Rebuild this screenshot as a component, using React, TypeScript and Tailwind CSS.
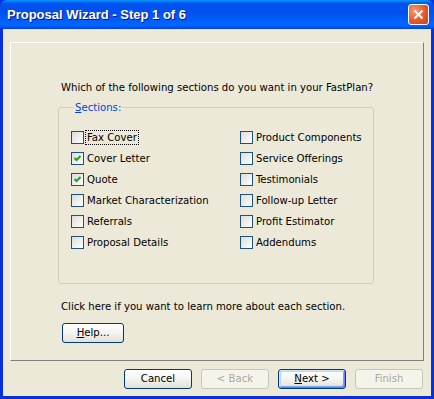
import React from 'react';

const left = [
  { label: 'Fax Cover', checked: false, focus: true },
  { label: 'Cover Letter', checked: true },
  { label: 'Quote', checked: true },
  { label: 'Market Characterization', checked: false },
  { label: 'Referrals', checked: false },
  { label: 'Proposal Details', checked: false },
];

const right = [
  { label: 'Product Components', checked: false },
  { label: 'Service Offerings', checked: false },
  { label: 'Testimonials', checked: false },
  { label: 'Follow-up Letter', checked: false },
  { label: 'Profit Estimator', checked: false },
  { label: 'Addendums', checked: false },
];

type Item = { label: string; checked: boolean; focus?: boolean };

function CheckRow({ item }: { item: Item }) {
  return (
    <div className="flex items-center h-[13px]">
      <span className="relative w-[13px] h-[13px] border border-[#1c5180] bg-gradient-to-br from-[#dcdcd7] to-white shrink-0">
        {item.checked && (
          <svg width="11" height="11" viewBox="0 0 11 11" className="absolute left-0 top-0">
            <polyline points="2.5,5 4.5,7 8.5,3" fill="none" stroke="#21a121" strokeWidth="2" />
          </svg>
        )}
      </span>
      <span
        className={
          'ml-[2px] px-[1px] leading-[13px] ' +
          (item.focus ? 'outline outline-1 outline-dotted outline-black' : '')
        }
      >
        {item.label}
      </span>
    </div>
  );
}

function XpButton({
  children,
  disabled,
  primary,
  className,
}: {
  children: React.ReactNode;
  disabled?: boolean;
  primary?: boolean;
  className?: string;
}) {
  let look =
    'border-[#003c74] bg-gradient-to-b from-white via-[#f4f4f0] to-[#e3e0d5] text-black';
  if (disabled) look = 'border-[#c9c7ba] bg-[#f5f4ea] text-[#aca899]';
  if (primary)
    look +=
      ' shadow-[inset_1px_1px_0_#cee7ff,inset_-1px_-1px_0_#6982ee,inset_2px_2px_0_#bcd4f6,inset_-2px_-2px_0_#7b9ff2]';
  return (
    <div
      className={
        'h-[20px] flex items-center justify-center border rounded-[3px] ' +
        look +
        ' ' +
        (className || '')
      }
    >
      {children}
    </div>
  );
}

export default function App() {
  return (
    <div
      className="w-[434px] h-[399px] flex flex-col bg-[#0831d9] text-[11.25px] text-black"
      style={{ fontFamily: '"DejaVu Sans Condensed", "DejaVu Sans", sans-serif' }}
    >
      {/* Title bar */}
      <div className="h-[29px] shrink-0 flex items-center justify-between pl-[7px] pr-[5px] rounded-t-[7px] bg-[linear-gradient(to_bottom,#0997ff_0%,#0053ee_12%,#0050ee_40%,#0066ff_85%,#005bff_92%,#003dd7_100%)]">
        <span
          className="text-white font-bold text-[13px] [text-shadow:1px_1px_0_#0f1089]"
          style={{ fontFamily: '"Liberation Sans", Arial, sans-serif' }}
        >
          Proposal Wizard - Step 1 of 6
        </span>
        <div className="w-[21px] h-[21px] rounded-[3px] border border-white bg-[radial-gradient(circle_at_30%_30%,#f29a77,#e2592f_55%,#c9421a)] flex items-center justify-center">
          <svg width="11" height="11" viewBox="0 0 11 11">
            <path d="M1.5 1.5 L9.5 9.5 M9.5 1.5 L1.5 9.5" stroke="white" strokeWidth="2" />
          </svg>
        </div>
      </div>

      {/* Client area */}
      <div className="flex-1 mx-[3px] mb-[3px] bg-[#ece9d8] flex flex-col pt-[13px] px-[7px]">
        <div className="h-[319px] border border-t-white border-l-white border-r-[#808080] border-b-[#808080] pl-[47px] pt-[38px]">
          <div className="ml-[3px] leading-[13px]">
            Which of the following sections do you want in your FastPlan?
          </div>

          <fieldset className="mt-[7px] w-[316px] h-[183px] border border-[#d0d0bf] rounded-[3px] pl-[12px] pt-[17px]">
            <legend className="ml-[3px] px-[1px] text-[#0046d5] leading-[13px]">
              <span className="underline">S</span>ections:
            </legend>
            <div className="flex">
              <div className="w-[169px] flex flex-col gap-[8px]">
                {left.map((it) => (
                  <CheckRow key={it.label} item={it} />
                ))}
              </div>
              <div className="flex flex-col gap-[8px]">
                {right.map((it) => (
                  <CheckRow key={it.label} item={it} />
                ))}
              </div>
            </div>
          </fieldset>

          <div className="ml-[3px] mt-[16px] leading-[13px]">
            Click here if you want to learn more about each section.
          </div>
          <XpButton className="w-[62px] h-[19px] mt-[10px] ml-[4px]">
            <span className="underline">H</span>elp...
          </XpButton>
        </div>

        <div className="flex justify-end gap-[9px] mt-[8px] pr-[1px]">
          <XpButton className="w-[68px]">Cancel</XpButton>
          <XpButton className="w-[68px]" disabled>
            &lt; Back
          </XpButton>
          <XpButton className="w-[68px]" primary>
            <span className="underline">N</span>ext &gt;
          </XpButton>
          <XpButton className="w-[68px]" disabled>
            Finish
          </XpButton>
        </div>
      </div>
    </div>
  );
}
